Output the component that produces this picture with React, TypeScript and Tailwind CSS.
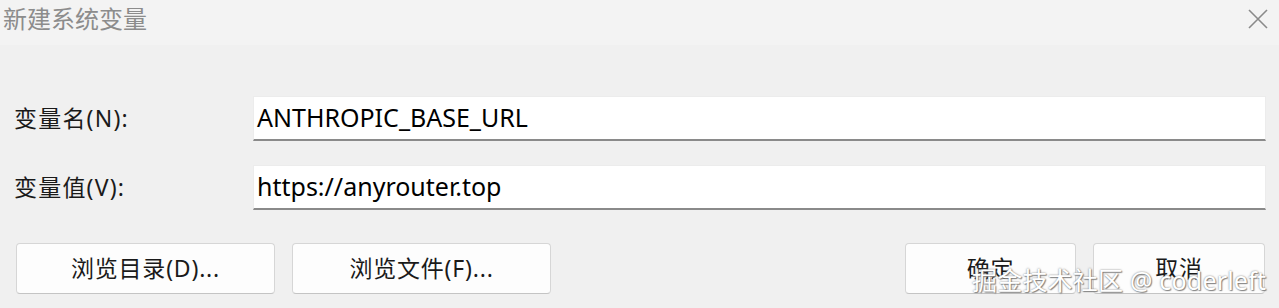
import React from 'react';

const font = { fontFamily: '"Noto Sans", "Noto Sans CJK SC", sans-serif' };

function Field({ label, value }: { label: string; value: string }) {
  return (
    <div className="flex items-center h-[45px]">
      <div className="w-[253px] pl-[14px] text-[23px] tracking-[1.2px] text-[#1a1a1a] leading-none">{label}</div>
      <div className="w-[1013px] h-[45px] bg-white border border-[#ececec] border-b-2 border-b-[#8a8a8a] flex items-center pl-[3px] pb-[2px] text-[25px] text-black leading-none">
        {value}
      </div>
    </div>
  );
}

function Btn({ children, w }: { children: React.ReactNode; w: string }) {
  return (
    <button className={`${w} h-[51px] bg-[#fdfdfd] border border-[#d6d6d6] border-b-[#c4c4c4] rounded-[4px] text-[23px] tracking-[0.8px] text-[#1a1a1a] flex items-center justify-center leading-none`}>
      {children}
    </button>
  );
}

export default function App() {
  return (
    <div className="relative w-[1279px] h-[308px] bg-[#f0f0f0] overflow-hidden" style={font}>
      {/* title bar */}
      <div className="h-[45px] bg-[#f3f3f3] flex items-start justify-between">
        <div className="pl-[3px] pt-[5px] text-[24px] text-[#8c8c8c] leading-[28px]">新建系统变量</div>
        <svg className="mt-[9px] mr-[11px]" width="20" height="20" viewBox="0 0 20 20">
          <path d="M1 1 L19 19 M19 1 L1 19" stroke="#8a8a8a" strokeWidth="1.6" fill="none" />
        </svg>
      </div>

      <div className="pt-[51px] flex flex-col gap-[24px]">
        <Field label="变量名(N):" value="ANTHROPIC_BASE_URL" />
        <Field label="变量值(V):" value="https://anyrouter.top" />
      </div>

      <div className="mt-[33px] flex justify-between pl-[16px] pr-[14px]">
        <div className="flex gap-[17px]">
          <Btn w="w-[259px]">浏览目录(D)...</Btn>
          <Btn w="w-[259px]">浏览文件(F)...</Btn>
        </div>
        <div className="flex gap-[17px]">
          <Btn w="w-[171px]">确定</Btn>
          <Btn w="w-[172px]">取消</Btn>
        </div>
      </div>

      {/* watermark */}
      <div
        className="absolute left-[972px] top-[268px] text-[25px] tracking-[0.2px] text-white leading-none whitespace-nowrap pointer-events-none"
        style={{ textShadow: '0 0 2px #777, 1px 1px 1px #888' }}
      >
        掘金技术社区 @ coderleft
      </div>
    </div>
  );
}
